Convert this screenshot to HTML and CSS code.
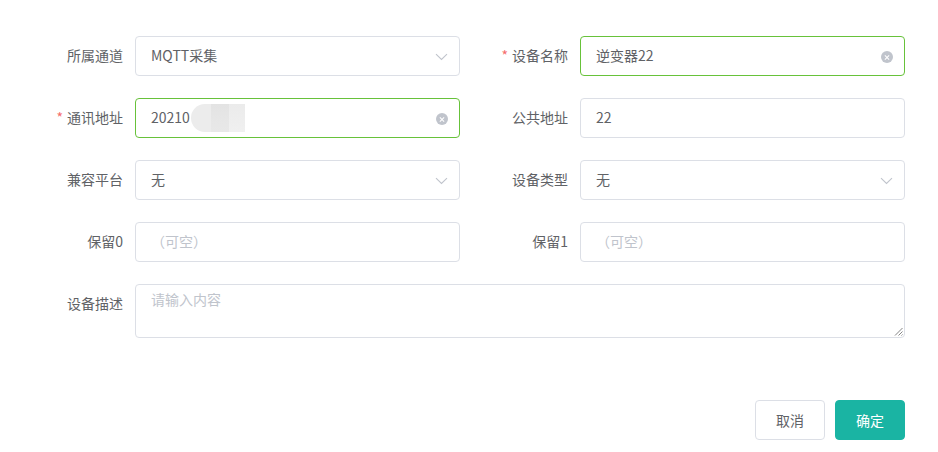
FILE: index.html
```html
<!DOCTYPE html>
<html lang="zh-CN">
<head>
<meta charset="utf-8">
<title>设备</title>
<link rel="stylesheet" href="styles.css">
</head>
<body>
<div class="dialog">
  <form class="form">
    <div class="item">
      <label class="label">所属通道</label>
      <div class="control select">
        <span class="value">MQTT采集</span>
        <svg class="arrow" width="13" height="8" viewBox="0 0 13 8"><path d="M1 1.2 L6.5 6.5 L12 1.2" fill="none" stroke="#c0c4cc" stroke-width="1.1"/></svg>
      </div>
    </div>
    <div class="item">
      <label class="label"><span class="star">*</span>设备名称</label>
      <div class="control focus">
        <span class="value">逆变器22</span>
        <span class="clear"></span>
      </div>
    </div>
    <div class="item">
      <label class="label"><span class="star">*</span>通讯地址</label>
      <div class="control focus">
        <span class="value">20210</span><span class="blur"><i class="b1"></i><i class="b2"></i><i class="b3"></i></span>
        <span class="clear"></span>
      </div>
    </div>
    <div class="item">
      <label class="label">公共地址</label>
      <div class="control">
        <span class="value">22</span>
      </div>
    </div>
    <div class="item">
      <label class="label">兼容平台</label>
      <div class="control select">
        <span class="value">无</span>
        <svg class="arrow" width="13" height="8" viewBox="0 0 13 8"><path d="M1 1.2 L6.5 6.5 L12 1.2" fill="none" stroke="#c0c4cc" stroke-width="1.1"/></svg>
      </div>
    </div>
    <div class="item">
      <label class="label">设备类型</label>
      <div class="control select">
        <span class="value">无</span>
        <svg class="arrow" width="13" height="8" viewBox="0 0 13 8"><path d="M1 1.2 L6.5 6.5 L12 1.2" fill="none" stroke="#c0c4cc" stroke-width="1.1"/></svg>
      </div>
    </div>
    <div class="item">
      <label class="label">保留0</label>
      <div class="control">
        <span class="placeholder">（可空）</span>
      </div>
    </div>
    <div class="item">
      <label class="label">保留1</label>
      <div class="control">
        <span class="placeholder">（可空）</span>
      </div>
    </div>
    <div class="item wide">
      <label class="label">设备描述</label>
      <div class="textarea">
        <span class="placeholder">请输入内容</span>
        <svg class="grip" width="9" height="9" viewBox="0 0 9 9"><path d="M8.5 1 L1 8.5 M8.5 4.5 L4.5 8.5 M8.5 7.5 L7.5 8.5" stroke="#777" stroke-width="0.9"/></svg>
      </div>
    </div>
  </form>
  <div class="footer">
    <button class="btn" type="button">取消</button>
    <button class="btn primary" type="button">确定</button>
  </div>
</div>
</body>
</html>
```
FILE: styles.css
```css
html, body {
  margin: 0;
  padding: 0;
  background: #ffffff;
}
body {
  font-family: "Noto Sans CJK SC", "Noto Sans", sans-serif;
  font-size: 14px;
  color: #606266;
}
.dialog {
  padding: 36px 33px 0 35px;
}
.form {
  display: grid;
  grid-template-columns: 1fr 1fr;
  column-gap: 20px;
  row-gap: 22px;
}
.item {
  display: flex;
  align-items: flex-start;
}
.item.wide {
  grid-column: 1 / 3;
}
.label {
  width: 100px;
  flex: none;
  box-sizing: border-box;
  padding-right: 12px;
  text-align: right;
  line-height: 38px;
  color: #606266;
}
.star {
  color: #f56c6c;
  margin-right: 4px;
}
.control {
  flex: 1;
  height: 40px;
  box-sizing: border-box;
  border: 1px solid #dcdfe6;
  border-radius: 4px;
  padding: 0 15px 2px;
  display: flex;
  align-items: center;
  line-height: 36px;
}
.control.focus {
  border-color: #67c23a;
}
.value {
  color: #606266;
}
.placeholder {
  color: #c0c4cc;
}
.arrow {
  margin-left: auto;
  margin-right: -4px;
  margin-top: 3px;
}
.clear {
  margin-left: auto;
  margin-right: -4px;
  width: 12px;
  height: 12px;
  border-radius: 50%;
  background: #c0c4cc;
  position: relative;
  margin-top: 4px;
}
.clear::before,
.clear::after {
  content: "";
  position: absolute;
  left: 3px;
  top: 5.5px;
  width: 6px;
  height: 1px;
  background: #ffffff;
  transform: rotate(45deg);
}
.clear::after {
  transform: rotate(-45deg);
}
.blur {
  display: inline-flex;
  height: 28px;
  width: 54px;
  margin-left: 1px;
  margin-top: 2px;
  border-radius: 14px 0 0 14px;
  overflow: hidden;
  filter: blur(0.6px);
}
.blur i {
  display: block;
  height: 100%;
}
.blur .b1 {
  width: 20px;
  background: #ececec;
}
.blur .b2 {
  width: 18px;
  background: linear-gradient(#e3e3e3, #e6e6e6 50%, #e8e8e8);
}
.blur .b3 {
  width: 16px;
  background: linear-gradient(#ebebeb, #f0f0f0);
}
.textarea {
  flex: 1;
  height: 54px;
  box-sizing: border-box;
  border: 1px solid #dcdfe6;
  border-radius: 4px;
  padding: 4px 15px 5px;
  line-height: 21px;
  position: relative;
}
.grip {
  position: absolute;
  right: 1px;
  bottom: 1px;
}
.footer {
  display: flex;
  justify-content: flex-end;
  gap: 10px;
  margin-top: 62px;
}
.btn {
  width: 70px;
  height: 40px;
  box-sizing: border-box;
  border: 1px solid #dcdfe6;
  border-radius: 4px;
  background: #ffffff;
  color: #606266;
  font-family: "Noto Sans CJK SC", "Noto Sans", sans-serif;
  font-size: 14px;
  padding: 0 0 1px;
}
.btn.primary {
  background: #1ab4a3;
  border-color: #1ab4a3;
  color: #ffffff;
}
```
